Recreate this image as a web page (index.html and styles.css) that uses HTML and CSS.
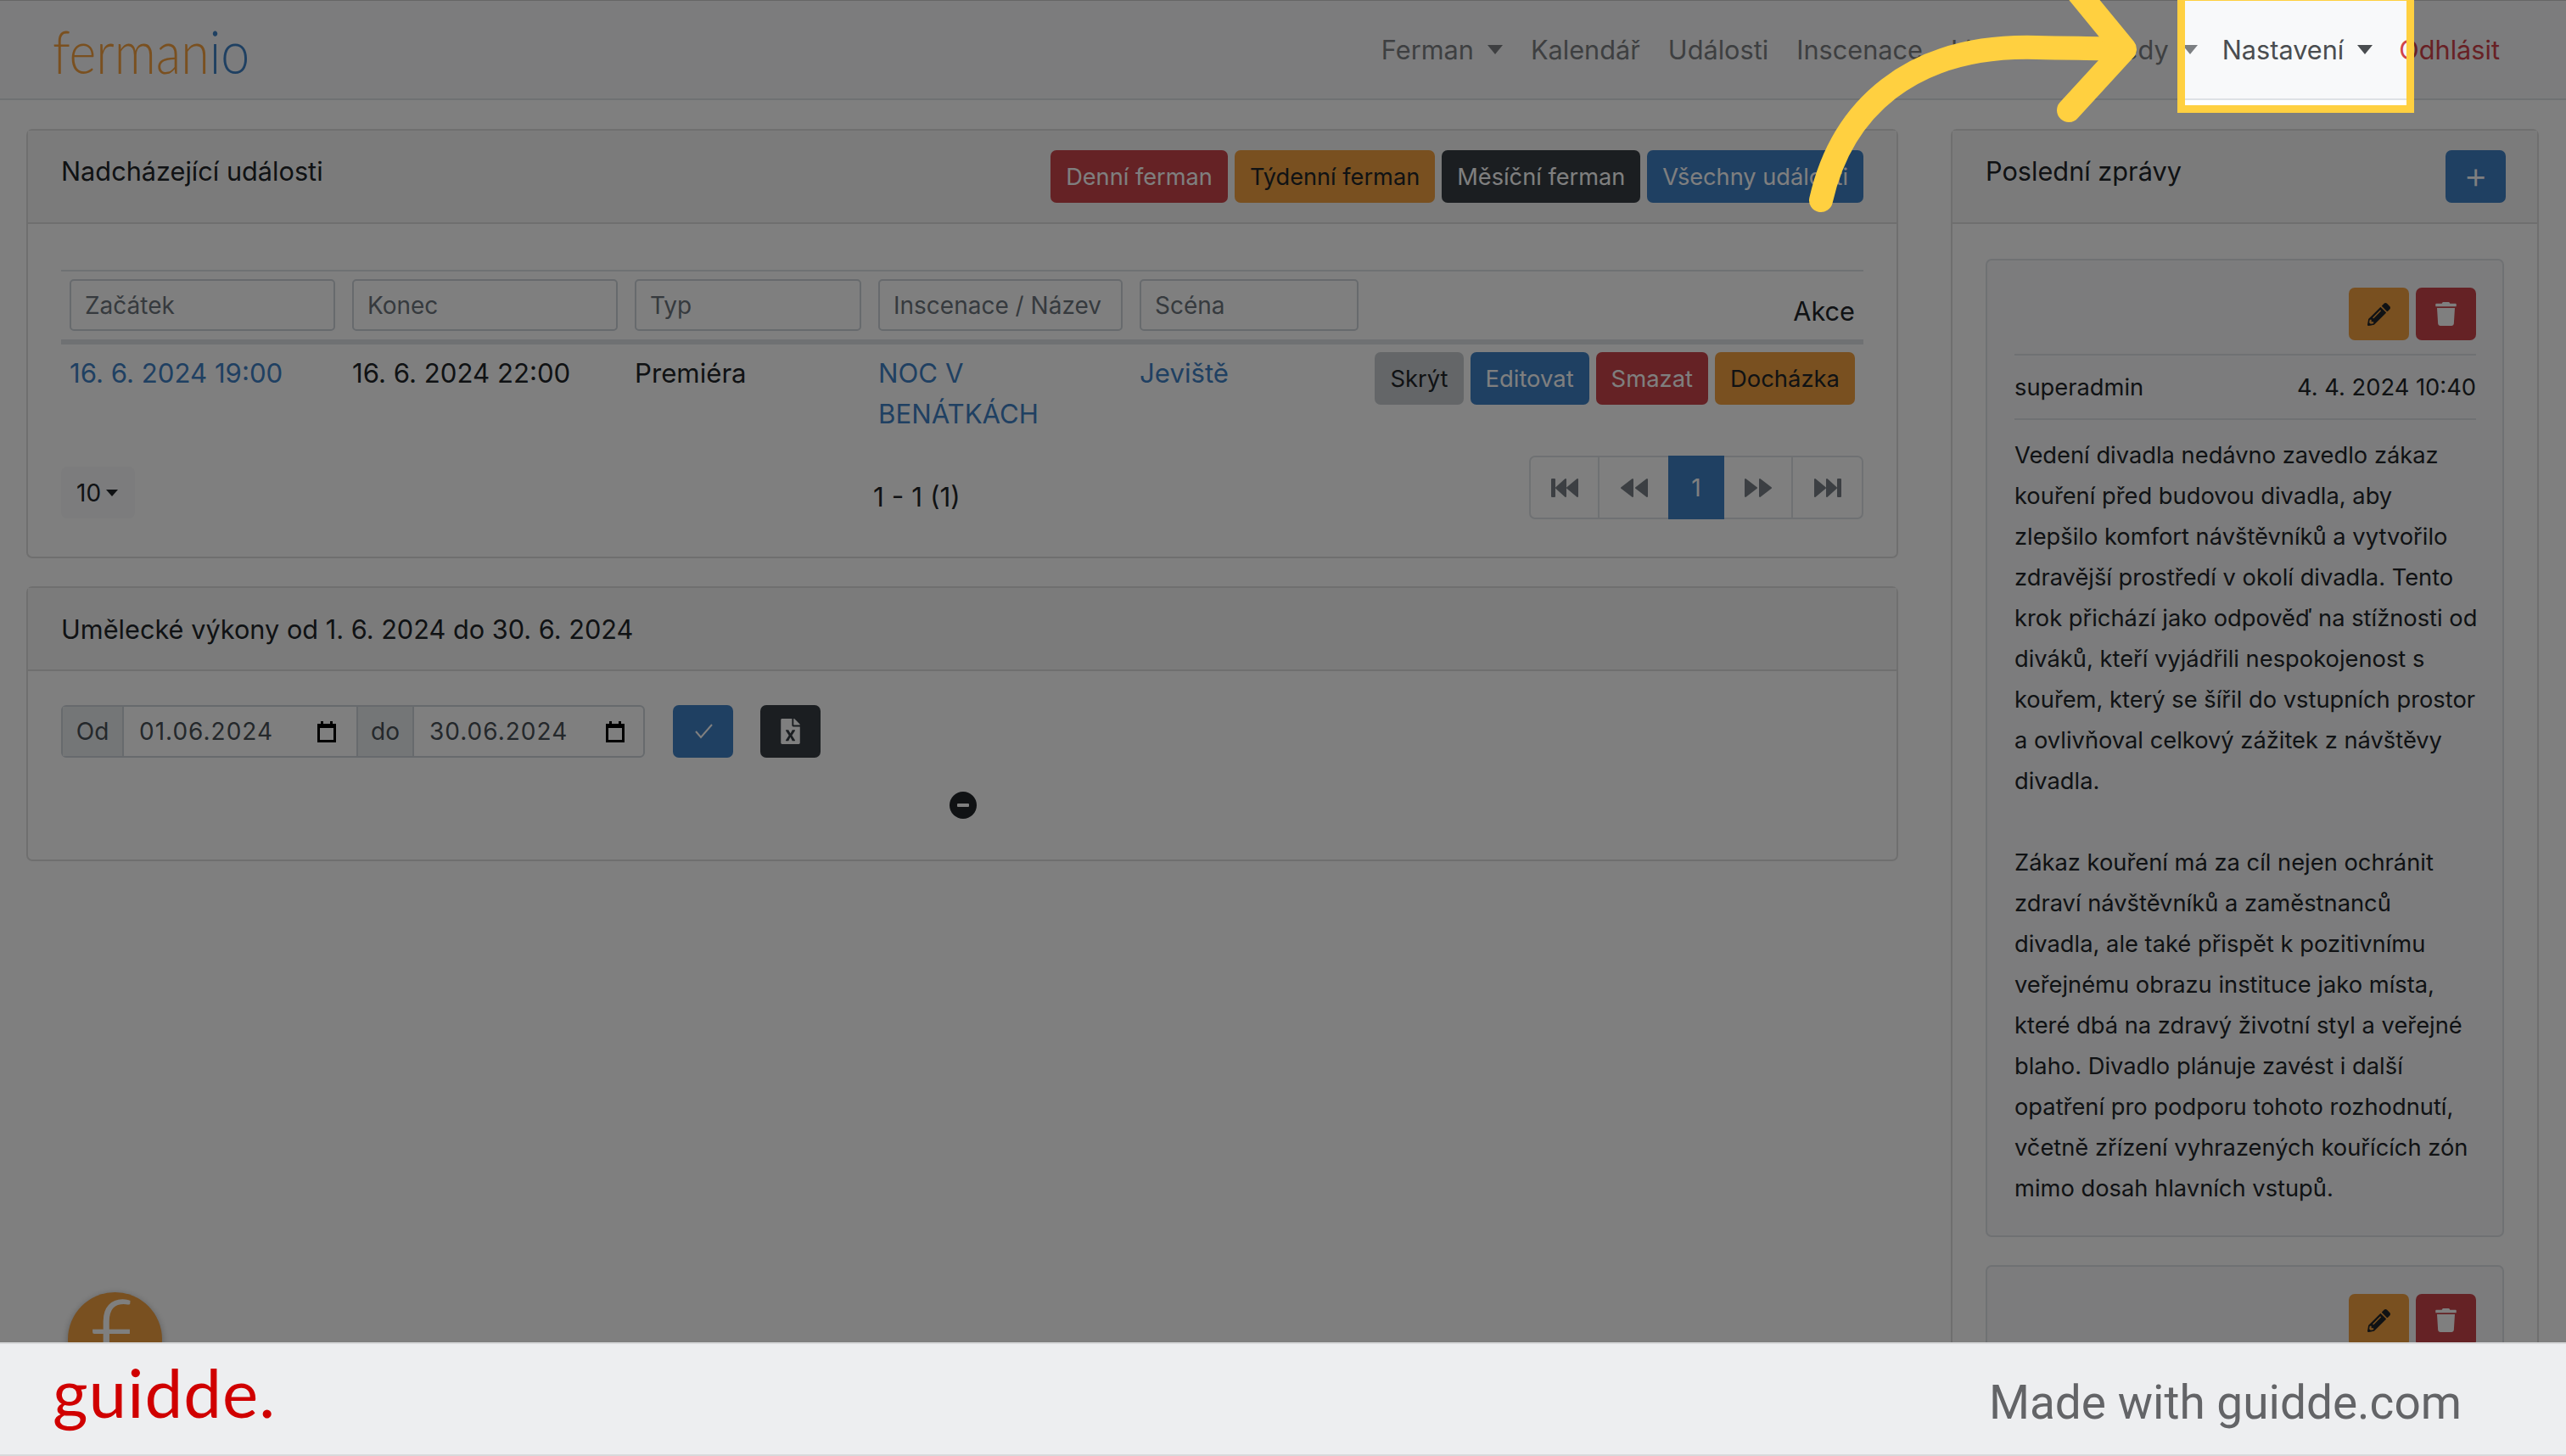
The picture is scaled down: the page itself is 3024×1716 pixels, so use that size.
FILE: index.html
```html
<!DOCTYPE html>
<html lang="cs">
  <head>
    <meta charset="UTF-8">
    <title>Fermanio</title>
    <link rel="stylesheet" href="styles.css">
  </head>
  <body>
    <div class="page">
      <nav class="navbar">
        <a class="logo">ferman<span class="logo-end">io</span></a>
        <ul class="nav-list">
          <li class="nav-item">Ferman<i class="caret"></i></li>
          <li class="nav-item">Kalendář</li>
          <li class="nav-item">Události</li>
          <li class="nav-item">Inscenace</li>
          <li class="nav-item">Lidé<i class="caret"></i></li>
          <li class="nav-item">Přehledy<i class="caret"></i></li>
          <li class="nav-item nav-active">Nastavení<i class="caret"></i></li>
          <li class="nav-item nav-logout">Odhlásit</li>
        </ul>
      </nav>

      <main class="content">
        <section class="col-main">
          <div class="card">
            <div class="card-header">
              <h2 class="card-title">Nadcházející události</h2>
              <div class="btn-row head-actions">
                <button class="btn btn-red">Denní ferman</button>
                <button class="btn btn-orange">Týdenní ferman</button>
                <button class="btn btn-dark">Měsíční ferman</button>
                <button class="btn btn-blue">Všechny události</button>
              </div>
            </div>
            <div class="card-body events-body">
              <table class="events">
                <colgroup>
                  <col class="col-start"><col class="col-end"><col class="col-type"><col class="col-name"><col class="col-scene"><col>
                </colgroup>
                <thead>
                  <tr>
                    <th><input class="filter" placeholder="Začátek"></th>
                    <th><input class="filter" placeholder="Konec"></th>
                    <th><input class="filter" placeholder="Typ"></th>
                    <th><input class="filter" placeholder="Inscenace / Název"></th>
                    <th><input class="filter" placeholder="Scéna"></th>
                    <th class="th-actions">Akce</th>
                  </tr>
                </thead>
                <tbody>
                  <tr>
                    <td><a class="link">16. 6. 2024 19:00</a></td>
                    <td>16. 6. 2024 22:00</td>
                    <td>Premiéra</td>
                    <td><a class="link">NOC V<br>BENÁTKÁCH</a></td>
                    <td><a class="link">Jeviště</a></td>
                    <td>
                      <div class="btn-row row-actions">
                        <button class="btn btn-gray">Skrýt</button>
                        <button class="btn btn-blue">Editovat</button>
                        <button class="btn btn-red">Smazat</button>
                        <button class="btn btn-orange">Docházka</button>
                      </div>
                    </td>
                  </tr>
                </tbody>
              </table>
              <div class="table-foot">
                <div class="page-size">10<i class="caret caret-small"></i></div>
                <div class="page-count">1 - 1 (1)</div>
                <div class="pager">
                  <span class="pager-cell">
                    <svg width="32" height="24" viewBox="0 0 32 24"><path d="M1 2h3v20H1zM6 12 17 2v20zM19 12 31 2v20z"/></svg>
                  </span>
                  <span class="pager-cell">
                    <svg width="32" height="24" viewBox="0 0 32 24"><path d="M1 12 14 2v20zM18 12 31 2v20z"/></svg>
                  </span>
                  <span class="pager-cell pager-active">1</span>
                  <span class="pager-cell">
                    <svg width="32" height="24" viewBox="0 0 32 24"><path d="M1 2l13 10L1 22zM18 2l13 10-13 10z"/></svg>
                  </span>
                  <span class="pager-cell">
                    <svg width="32" height="24" viewBox="0 0 32 24"><path d="M1 2l12 10L1 22zM15 2l11 10-11 10zM28 2h3v20h-3z"/></svg>
                  </span>
                </div>
              </div>
            </div>
          </div>

          <div class="card card-second">
            <div class="card-header header-slim">
              <h2 class="card-title">Umělecké výkony od 1. 6. 2024 do 30. 6. 2024</h2>
            </div>
            <div class="card-body range-body">
              <div class="range-row">
                <div class="input-group">
                  <span class="addon addon-od">Od</span>
                  <span class="date-input date-first">01.06.2024
                    <svg class="cal" width="22" height="25" viewBox="0 0 22 25"><path d="M4 0h3v3h8V0h3v3h4v22H0V3h4zM3 8v14h16V8z"/></svg>
                  </span>
                  <span class="addon addon-do">do</span>
                  <span class="date-input date-second">30.06.2024
                    <svg class="cal" width="22" height="25" viewBox="0 0 22 25"><path d="M4 0h3v3h8V0h3v3h4v22H0V3h4zM3 8v14h16V8z"/></svg>
                  </span>
                </div>
                <button class="btn btn-blue btn-icon">
                  <svg width="26" height="18" viewBox="0 0 26 18"><path class="check" d="M4 9l6 7L23 1"/></svg>
                </button>
                <button class="btn btn-dark btn-icon">
                  <svg width="23" height="30" viewBox="0 0 384 512"><path fill="#fff" d="M224 136V0H24C10.7 0 0 10.7 0 24v464c0 13.3 10.7 24 24 24h336c13.3 0 24-10.7 24-24V160H248c-13.2 0-24-10.8-24-24zm60.1 106.5L224 336l60.1 93.5c5.1 8-.6 18.5-10.1 18.5h-34.9c-4.4 0-8.5-2.4-10.6-6.3C208.9 405.5 192 373 192 373c-6.4 14.8-10 20-36.6 68.8-2.1 3.9-6.1 6.3-10.5 6.3H110c-9.5 0-15.2-10.5-10.1-18.5l60.3-93.5-60.3-93.5c-5.2-8 .6-18.5 10.1-18.5h34.8c4.4 0 8.5 2.4 10.6 6.3 26.1 48.8 20 33.6 36.6 68.5 0 0 6.1-11.7 36.6-68.5 2.1-3.9 6.2-6.3 10.6-6.3H274c9.5-.1 15.2 10.4 10.1 18.4zM384 121.9v6.1H256V0h6.1c6.4 0 12.5 2.5 17 7l97.9 98c4.5 4.5 7 10.6 7 16.9z"/></svg>
                </button>
              </div>
              <div class="loader"><i class="loader-bar"></i></div>
            </div>
          </div>
        </section>

        <aside class="col-side">
          <div class="card card-news">
            <div class="card-header news-header">
              <h2 class="card-title">Poslední zprávy</h2>
              <button class="btn btn-blue btn-plus">+</button>
            </div>
            <div class="card-body news-body">
              <article class="message">
                <div class="message-tools">
                  <button class="btn btn-orange btn-tool">
                    <svg width="27" height="27" viewBox="0 0 512 512"><path fill="#212529" d="M497.9 142.1l-46.1 46.1c-4.7 4.7-12.3 4.7-17 0l-111-111c-4.7-4.7-4.7-12.3 0-17l46.1-46.1c18.7-18.7 49.1-18.7 67.9 0l60.1 60.1c18.8 18.7 18.8 49.1 0 67.9zM284.2 99.8L21.6 362.4.4 483.9c-2.9 16.4 11.4 30.6 27.8 27.8l121.5-21.3 262.6-262.6c4.7-4.7 4.7-12.3 0-17l-111-111c-4.8-4.7-12.4-4.7-17.1 0zM124.1 339.9c-5.5-5.5-5.5-14.3 0-19.8l154-154c5.5-5.5 14.3-5.5 19.8 0s5.5 14.3 0 19.8l-154 154c-5.5 5.5-14.3 5.5-19.8 0zM88 424h48v36.3l-64.5 11.3-31.1-31.1L51.7 376H88v48z"/></svg>
                  </button>
                  <button class="btn btn-red btn-tool">
                    <svg width="25" height="28" viewBox="0 0 448 512"><path fill="#fff" d="M432 32H312l-9.4-18.7A24 24 0 0 0 281.1 0H166.8a23.72 23.72 0 0 0-21.4 13.3L136 32H16A16 16 0 0 0 0 48v32a16 16 0 0 0 16 16h416a16 16 0 0 0 16-16V48a16 16 0 0 0-16-16zM53.2 467a48 48 0 0 0 47.9 45h245.8a48 48 0 0 0 47.9-45L416 128H32z"/></svg>
                  </button>
                </div>
                <div class="message-meta">
                  <span>superadmin</span>
                  <span>4. 4. 2024 10:40</span>
                </div>
                <p class="message-text">Vedení divadla nedávno zavedlo zákaz<br>kouření před budovou divadla, aby<br>zlepšilo komfort návštěvníků a vytvořilo<br>zdravější prostředí v okolí divadla. Tento<br>krok přichází jako odpověď na stížnosti od<br>diváků, kteří vyjádřili nespokojenost s<br>kouřem, který se šířil do vstupních prostor<br>a ovlivňoval celkový zážitek z návštěvy<br>divadla.<br><br>Zákaz kouření má za cíl nejen ochránit<br>zdraví návštěvníků a zaměstnanců<br>divadla, ale také přispět k pozitivnímu<br>veřejnému obrazu instituce jako místa,<br>které dbá na zdravý životní styl a veřejné<br>blaho. Divadlo plánuje zavést i další<br>opatření pro podporu tohoto rozhodnutí,<br>včetně zřízení vyhrazených kouřících zón<br>mimo dosah hlavních vstupů.</p>
              </article>
              <article class="message">
                <div class="message-tools">
                  <button class="btn btn-orange btn-tool">
                    <svg width="27" height="27" viewBox="0 0 512 512"><path fill="#212529" d="M497.9 142.1l-46.1 46.1c-4.7 4.7-12.3 4.7-17 0l-111-111c-4.7-4.7-4.7-12.3 0-17l46.1-46.1c18.7-18.7 49.1-18.7 67.9 0l60.1 60.1c18.8 18.7 18.8 49.1 0 67.9zM284.2 99.8L21.6 362.4.4 483.9c-2.9 16.4 11.4 30.6 27.8 27.8l121.5-21.3 262.6-262.6c4.7-4.7 4.7-12.3 0-17l-111-111c-4.8-4.7-12.4-4.7-17.1 0zM124.1 339.9c-5.5-5.5-5.5-14.3 0-19.8l154-154c5.5-5.5 14.3-5.5 19.8 0s5.5 14.3 0 19.8l-154 154c-5.5 5.5-14.3 5.5-19.8 0zM88 424h48v36.3l-64.5 11.3-31.1-31.1L51.7 376H88v48z"/></svg>
                  </button>
                  <button class="btn btn-red btn-tool">
                    <svg width="25" height="28" viewBox="0 0 448 512"><path fill="#fff" d="M432 32H312l-9.4-18.7A24 24 0 0 0 281.1 0H166.8a23.72 23.72 0 0 0-21.4 13.3L136 32H16A16 16 0 0 0 0 48v32a16 16 0 0 0 16 16h416a16 16 0 0 0 16-16V48a16 16 0 0 0-16-16zM53.2 467a48 48 0 0 0 47.9 45h245.8a48 48 0 0 0 47.9-45L416 128H32z"/></svg>
                  </button>
                </div>
              </article>
            </div>
          </div>
        </aside>
      </main>

      <div class="float-btn">f</div>

      <!-- dim layer comes from the box-shadow of the highlight -->
      <div class="highlight"></div>
      <svg class="arrow" width="3024" height="300" viewBox="0 0 3024 300">
        <path d="M2146 236C2170 130 2250 52 2400 56C2450 57 2480 57 2500 58"/>
        <path d="M2440 -20L2504 58L2438 130"/>
      </svg>

      <footer class="brand-bar">
        <span class="brand-logo">guidde.</span>
        <span class="brand-note">Made with guidde.com</span>
      </footer>
    </div>
  </body>
</html>
```

FILE: styles.css
```css
* {
	box-sizing: border-box;
}

html, body {
	margin: 0;
	padding: 0;
	overflow: hidden;
}

body {
	background-color: #fff;
	color: #212529;
	font-family: Inter, "Noto Sans", Arial, sans-serif;
	font-size: 31.2px;
}

.page {
	position: relative;
	width: 3024px;
	height: 1716px;
	overflow: hidden;
	display: flex;
	flex-direction: column;
}

/* navbar */
.navbar {
	flex: none;
	height: 118px;
	background-color: #f8f9fa;
	border-top: 1px solid #ccc;
	border-bottom: 2px solid #dee2e6;
	display: flex;
	align-items: center;
	justify-content: space-between;
	padding: 0 78px 0 62px;
}

.logo {
	font-family: Lato, sans-serif;
	font-weight: 300;
	font-size: 70px;
	color: #f4a040;
	line-height: 1;
	margin-top: 2px;
	transform: scaleX(0.87);
	transform-origin: left center;
}

.logo-end {
	color: #3e80c4;
}

.nav-list {
	display: flex;
	list-style: none;
	margin: 0;
	padding: 0;
	gap: 33px;
}

.nav-item {
	display: flex;
	align-items: center;
	font-size: 30.7px;
	color: #7c7f82;
}

.nav-active {
	color: #4a4d50;
	margin-left: -4px;
	margin-right: -2px;
}

.nav-logout {
	color: #d0434b;
}

.caret {
	display: inline-block;
	width: 0;
	height: 0;
	margin-left: 16px;
	border-top: 11px solid currentColor;
	border-left: 9px solid transparent;
	border-right: 9px solid transparent;
}

.caret-small {
	margin-left: 6px;
	border-top-width: 8px;
	border-left-width: 7px;
	border-right-width: 7px;
	color: #212529;
}

/* columns */
.content {
	flex: 1;
	min-height: 0;
	overflow: hidden;
	display: grid;
	grid-template-columns: 2206px 693px;
	column-gap: 62px;
	padding: 34px 32px 0 31px;
	align-items: start;
}

.card {
	background-color: #fff;
	border: 2px solid #dfdfdf;
	border-radius: 7px;
}

.card-second {
	margin-top: 33px;
}

.card-header {
	height: 110px;
	background-color: #f7f7f7;
	border-bottom: 2px solid #dfdfdf;
	display: flex;
	justify-content: space-between;
	align-items: flex-start;
	padding: 23px 39px 0 39px;
}

.header-slim {
	height: 98px;
	align-items: center;
	padding-top: 0;
}

.news-header {
	padding-right: 37px;
}

.card-title {
	margin: 2px 0 0;
	font-size: 30.7px;
	font-weight: 400;
	line-height: 46px;
}

.btn-row {
	display: flex;
	gap: 8px;
}

.head-actions .btn {
	font-size: 27.2px;
}

.btn {
	height: 62px;
	padding: 0 18px;
	border: 0;
	border-radius: 7px;
	font-family: inherit;
	font-size: 27.4px;
	color: #fff;
	display: flex;
	align-items: center;
	justify-content: center;
}

.btn-red {
	background-color: #ca444a;
}

.btn-orange {
	background-color: #f2a040;
	color: #212529;
}

.btn-dark {
	background-color: #363c42;
}

.btn-blue {
	background-color: #3e80c4;
}

.btn-gray {
	background-color: #c8ccd0;
	color: #212529;
}

/* events table */
.events-body {
	padding: 54px 39px 44px 39px;
}

.events {
	width: 100%;
	table-layout: fixed;
	border-collapse: collapse;
	border-top: 2px solid #dee2e6;
}

.col-start { width: 333px; }
.col-end { width: 333px; }
.col-type { width: 287px; }
.col-name { width: 308px; }
.col-scene { width: 278px; }

.events th {
	padding: 9px 10px 10px;
	border-bottom: 6px solid #dee2e6;
	font-weight: 400;
	vertical-align: bottom;
}

.th-actions {
	text-align: right;
	font-size: 30.7px;
	line-height: 46px;
}

.filter {
	display: block;
	width: 100%;
	height: 61px;
	padding: 0 16px;
	background-color: #fff;
	border: 2px solid #ced4da;
	border-radius: 5px;
	font-family: inherit;
	font-size: 28px;
}

.filter::placeholder {
	color: #6c757d;
	opacity: 1;
}

.events td {
	padding: 10px;
	line-height: 48px;
	vertical-align: top;
}

.link {
	color: #3e80c4;
}

.row-actions {
	justify-content: flex-end;
	margin-top: -1px;
}

.table-foot {
	display: grid;
	grid-template-columns: 957px 1fr auto;
	margin-top: 15px;
}

.page-size {
	width: 87px;
	height: 61px;
	margin-top: 13px;
	padding-left: 18px;
	background-color: #f8f9fa;
	border-radius: 7px;
	display: flex;
	align-items: center;
	font-size: 28px;
}

.page-count {
	font-size: 31.6px;
	line-height: 44px;
	margin-top: 27px;
}

.pager {
	display: flex;
	height: 75px;
	border: 2px solid #dee2e6;
	border-radius: 7px;
}

.pager-cell {
	display: flex;
	align-items: center;
	justify-content: center;
	width: 81px;
	border-right: 2px solid #dee2e6;
	fill: #787f86;
	stroke: #787f86;
	stroke-width: 2;
	stroke-linejoin: round;
}

.pager-cell:nth-child(2) {
	border-right: 0;
}

.pager-cell:last-child {
	border-right: 0;
}

.pager-active {
	width: 66px;
	height: 75px;
	margin-top: -2px;
	background-color: #3e80c4;
	border: 0;
	color: #fff;
	font-size: 28px;
}

/* date range */
.range-body {
	padding: 40px 38px 48px 39px;
}

.range-row {
	display: flex;
}

.input-group {
	display: flex;
	width: 688px;
	height: 62px;
	border: 2px solid #ced4da;
	border-radius: 6px;
	font-size: 28px;
	color: #495057;
	margin-right: 33px;
}

.addon {
	display: flex;
	align-items: center;
	justify-content: center;
	background-color: #e9ecef;
}

.addon-od {
	width: 72px;
	border-right: 2px solid #ced4da;
}

.addon-do {
	width: 68px;
	border-left: 2px solid #ced4da;
	border-right: 2px solid #ced4da;
}

.date-input {
	display: flex;
	align-items: center;
	justify-content: space-between;
	padding: 0 22px 0 18px;
	letter-spacing: 1px;
}

.date-first {
	width: 274px;
	padding-right: 24px;
}

.date-second {
	flex: 1;
}

.cal {
	fill: #000;
	flex: none;
}

.btn-icon {
	width: 71px;
	padding: 0;
	margin-right: 32px;
}

.check {
	fill: none;
	stroke: #fff;
	stroke-width: 2;
}

.loader {
	width: 32px;
	height: 32px;
	margin: 40px auto 0;
	border-radius: 50%;
	background-color: #212529;
	display: flex;
	align-items: center;
	justify-content: center;
}

.loader-bar {
	width: 14px;
	height: 4px;
	background-color: #fff;
	border-radius: 1px;
}

/* news */
.card-news {
	height: 1600px;
}

.btn-plus {
	width: 71px;
	padding: 0 0 4px;
	font-size: 44px;
	font-weight: 300;
}

.news-body {
	padding: 41px 39px 0 39px;
}

.message {
	background-color: #f8f9fa;
	border: 2px solid #dee2e6;
	border-radius: 7px;
	padding: 32px 31px 31px 32px;
	margin-bottom: 33px;
}

.message-tools {
	display: flex;
	justify-content: flex-end;
	gap: 8px;
	padding-bottom: 16px;
	border-bottom: 2px solid #dee2e6;
}

.btn-tool {
	width: 71px;
	padding: 0;
}

.message-meta {
	display: flex;
	justify-content: space-between;
	height: 76px;
	align-items: center;
	border-bottom: 2px solid #dee2e6;
	font-size: 27.3px;
}

.message-text {
	margin: 18px 0 0;
	font-size: 27.3px;
	line-height: 48px;
	white-space: nowrap;
}

/* floating help button, sits under the bar */
.float-btn {
	position: absolute;
	left: 80px;
	top: 1523px;
	width: 111px;
	height: 111px;
	padding-right: 10px;
	border-radius: 50%;
	background-color: #f2a040;
	box-shadow: 0 2px 8px rgba(0, 0, 0, 0.3);
	color: #fff;
	font-family: Lato, sans-serif;
	font-weight: 300;
	font-size: 150px;
	line-height: 116px;
	text-align: center;
}

/* spotlight on the menu item */
.highlight {
	position: absolute;
	left: 2566px;
	top: 0;
	width: 279px;
	height: 133px;
	border: 9px solid #ffd040;
	border-top-width: 1px;
	box-shadow: 0 0 0 4000px rgba(0, 0, 0, 0.5);
}

.arrow {
	position: absolute;
	left: 0;
	top: 0;
	fill: none;
	stroke: #ffd040;
	stroke-width: 28;
	stroke-linecap: round;
	stroke-linejoin: round;
}

/* bottom bar */
.brand-bar {
	position: relative;
	z-index: 3;
	flex: none;
	height: 134px;
	background-color: #edeef0;
	border-top: 2px solid #d8d9db;
	border-bottom: 2px solid #d8d9db;
	display: flex;
	align-items: center;
	justify-content: space-between;
	padding: 0 123px 0 62px;
}

.brand-logo {
	font-family: Lato, sans-serif;
	font-size: 80px;
	letter-spacing: 1px;
	color: #d00000;
	line-height: 1;
	margin-top: -18px;
}

.brand-note {
	font-family: Roboto, sans-serif;
	font-size: 55px;
	color: #636467;
	margin-top: 8px;
}
```
